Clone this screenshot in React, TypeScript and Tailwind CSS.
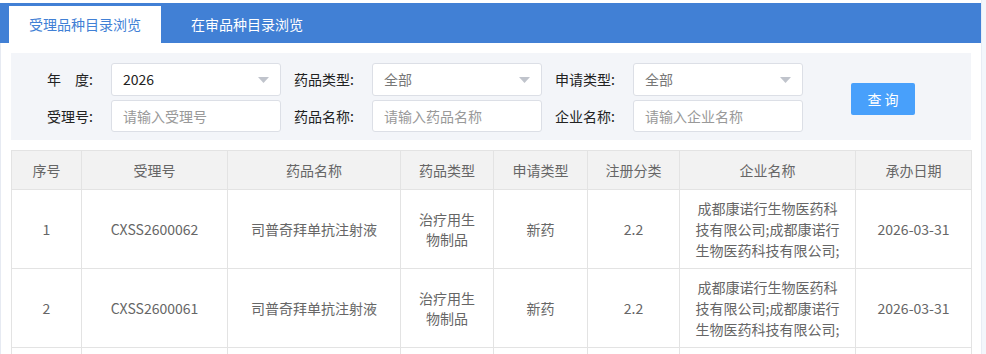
import React from "react";

const font = { fontFamily: '"Noto Sans CJK SC", "Noto Sans", sans-serif' };

function Caret() {
  return (
    <svg width="11" height="6" viewBox="0 0 11 6" className="shrink-0">
      <path d="M0 0 L11 0 L5.5 6 Z" fill="#c0c4cc" />
    </svg>
  );
}

function SelectBox({ value, muted, h }: { value: string; muted?: boolean; h: string }) {
  return (
    <div
      className={`w-[170px] ${h} flex items-center justify-between bg-white border border-[#dcdfe6] rounded-[3px] pl-[11px] pr-[11px] text-[14px] ${
        muted ? "text-[#777]" : "text-[#222]"
      }`}
    >
      <span>{value}</span>
      <Caret />
    </div>
  );
}

function InputBox({ placeholder, h }: { placeholder: string; h: string }) {
  return (
    <div
      className={`w-[170px] ${h} flex items-center bg-white border border-[#dcdfe6] rounded-[3px] pl-[11px] text-[14px] text-[#999]`}
    >
      {placeholder}
    </div>
  );
}

function Label({ text }: { text: string }) {
  return (
    <div className="w-[80px] pr-[18px] text-right text-[14px] text-[#222] whitespace-pre">{text}</div>
  );
}

const rows = [
  { no: "1", id: "CXSS2600062" },
  { no: "2", id: "CXSS2600061" },
];

export default function App() {
  return (
    <div className="w-[986px] h-[354px] overflow-hidden bg-white flex" style={font}>
      <div className="w-[981px] pt-[3px] flex flex-col">
        {/* Tabs */}
        <div className="h-[40px] bg-[#4180d5] flex items-end pl-[9px] shrink-0">
          <div className="h-[37px] w-[152px] bg-white flex items-center justify-center text-[14px] text-[#4180d5]">
            受理品种目录浏览
          </div>
          <div className="h-[37px] ml-[9px] px-[21px] flex items-center text-[14px] text-white">
            在审品种目录浏览
          </div>
        </div>

        <div className="flex-1 border-l border-[#e6eaf2] pl-[10px] pr-[10px] pt-[10px]">
          {/* Filter panel */}
          <div className="w-[960px] h-[87px] bg-[#f3f5f9] pt-[10px] pl-[20px] flex">
            <div className="flex flex-col gap-[4px]">
              <div className="flex items-center gap-[11px]">
                <div className="flex items-center">
                  <Label text={"年\u3000度:"} />
                  <SelectBox value="2026" h="h-[33px]" />
                </div>
                <div className="flex items-center">
                  <Label text="药品类型:" />
                  <SelectBox value="全部" muted h="h-[33px]" />
                </div>
                <div className="flex items-center">
                  <Label text="申请类型:" />
                  <SelectBox value="全部" muted h="h-[33px]" />
                </div>
              </div>
              <div className="flex items-center gap-[11px]">
                <div className="flex items-center">
                  <Label text="受理号:" />
                  <InputBox placeholder="请输入受理号" h="h-[32px]" />
                </div>
                <div className="flex items-center">
                  <Label text="药品名称:" />
                  <InputBox placeholder="请输入药品名称" h="h-[32px]" />
                </div>
                <div className="flex items-center">
                  <Label text="企业名称:" />
                  <InputBox placeholder="请输入企业名称" h="h-[32px]" />
                </div>
              </div>
            </div>
            <div className="ml-[48px] pt-[20px]">
              <button className="w-[64px] h-[32px] bg-[#48a0fb] rounded-[2px] text-white text-[14px] tracking-[3px] flex items-center justify-center pl-[3px]">
                查询
              </button>
            </div>
          </div>

          {/* Table */}
          <table className="mt-[10px] w-[960px] table-fixed border-collapse text-[14px] text-[#666]">
            <colgroup>
              <col className="w-[70px]" />
              <col className="w-[146px]" />
              <col className="w-[173px]" />
              <col className="w-[93px]" />
              <col className="w-[94px]" />
              <col className="w-[92px]" />
              <col className="w-[176px]" />
              <col className="w-[116px]" />
            </colgroup>
            <thead>
              <tr className="h-[39px] bg-[#f2f2f2]">
                {["序号", "受理号", "药品名称", "药品类型", "申请类型", "注册分类", "企业名称", "承办日期"].map((h) => (
                  <th key={h} className="border border-[#e3e3e3] font-normal text-[#666] p-0">
                    {h}
                  </th>
                ))}
              </tr>
            </thead>
            <tbody>
              {rows.map((r) => (
                <tr key={r.no} className="h-[79px] text-center">
                  <td className="border border-[#e3e3e3] p-0">{r.no}</td>
                  <td className="border border-[#e3e3e3] p-0">{r.id}</td>
                  <td className="border border-[#e3e3e3] p-0">司普奇拜单抗注射液</td>
                  <td className="border border-[#e3e3e3] p-0">
                    <div className="leading-[20px] whitespace-nowrap">
                      治疗用生
                      <br />
                      物制品
                    </div>
                  </td>
                  <td className="border border-[#e3e3e3] p-0">新药</td>
                  <td className="border border-[#e3e3e3] p-0">2.2</td>
                  <td className="border border-[#e3e3e3] p-0">
                    <div className="leading-[21px] whitespace-nowrap">
                      成都康诺行生物医药科
                      <br />
                      技有限公司;成都康诺行
                      <br />
                      生物医药科技有限公司;
                    </div>
                  </td>
                  <td className="border border-[#e3e3e3] p-0">2026-03-31</td>
                </tr>
              ))}
              <tr className="h-[79px]">
                {Array.from({ length: 8 }).map((_, i) => (
                  <td key={i} className="border border-[#e3e3e3] p-0" />
                ))}
              </tr>
            </tbody>
          </table>
        </div>
      </div>
      <div className="w-[5px] h-full bg-[#f3f6fb] border-l border-[#e8ecf4]" />
    </div>
  );
}
